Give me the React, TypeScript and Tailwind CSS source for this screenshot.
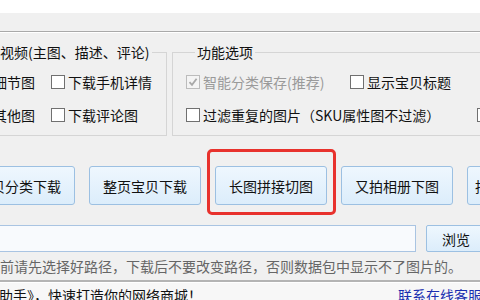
import React from 'react';

const font = { fontFamily: '"Noto Sans CJK SC", "Microsoft YaHei", sans-serif' };

const Box: React.FC<{ checked?: boolean; disabled?: boolean }> = ({ checked, disabled }) => (
  <span
    className={`flex h-[14px] w-[14px] shrink-0 items-center justify-center border ${
      disabled ? 'border-[#bcbcbc] bg-[#f4f4f4]' : 'border-[#707070] bg-white'
    }`}
  >
    {checked && (
      <svg width="10" height="10" viewBox="0 0 10 10">
        <path d="M1.5 5.2 L4 7.8 L8.6 1.8" fill="none" stroke={disabled ? '#a8a8a8' : '#222'} strokeWidth="1.8" />
      </svg>
    )}
  </span>
);

const Check: React.FC<{ label: string; checked?: boolean; disabled?: boolean }> = ({ label, checked, disabled }) => (
  <label className={`flex h-5 items-center gap-[3px] whitespace-nowrap ${disabled ? 'text-[#9a9a9a]' : 'text-[#111]'}`}>
    <Box checked={checked} disabled={disabled} />
    <span>{label}</span>
  </label>
);

const btnClass =
  'h-[39px] w-[112px] shrink-0 whitespace-nowrap rounded-[3px] border border-[#9cc0e2] bg-gradient-to-b from-[#eef7fe] to-[#dcedfb] text-[14px] text-[#111]';

export default function App() {
  return (
    <div style={font} className="relative h-[300px] w-[480px] overflow-hidden bg-[#f0f0f0] text-[14px] leading-5">
      <div className="h-[13px] bg-white" />
      <div className="h-[18px] bg-[#f0f0f0]" />
      <div className="h-[2px] border-t border-[#a9a9a9] bg-white" />

      <div className="mt-[9px] flex gap-[5px] -ml-[60px]">
        <fieldset className="w-[227px] shrink-0 border border-[#d5d5d5] pb-[10px] pl-[7px]">
          <legend className="ml-[52px] pr-[3px] whitespace-nowrap text-[#111]">视频(主图、描述、评论)</legend>
          <div className="mt-[10px] grid grid-cols-[103px_1fr] gap-y-[13px]">
            <Check label="下载细节图" />
            <Check label="下载手机详情" />
            <Check label="下载其他图" />
            <Check label="下载评论图" />
          </div>
        </fieldset>
        <fieldset className="w-[340px] shrink-0 border border-[#d5d5d5] pb-[10px] pl-[13px]">
          <legend className="ml-[9px] px-[2px] whitespace-nowrap text-[#111]">功能选项</legend>
          <div className="mt-[10px] grid grid-cols-[164px_127px_1fr] gap-y-[13px]">
            <Check label="智能分类保存(推荐)" checked disabled />
            <Check label="显示宝贝标题" />
            <span />
            <div className="col-span-2">
              <Check label="过滤重复的图片（SKU属性图不过滤）" />
            </div>
            <Check label="下载" />
          </div>
        </fieldset>
      </div>

      <div className="mt-[30px] flex gap-[14px] -ml-[37px]">
        <button className={btnClass}>宝贝分类下载</button>
        <button className={btnClass}>整页宝贝下载</button>
        <button className={btnClass}>长图拼接切图</button>
        <button className={btnClass}>又拍相册下图</button>
        <button className={`${btnClass} text-left pl-[7px]`}>批量下载</button>
      </div>

      <div className="mt-[20px] flex gap-[10px] -ml-[4px]">
        <input
          readOnly
          value=""
          className="h-[27px] w-[420px] shrink-0 border border-[#a9c4e2] bg-[#f8fafd] outline-none"
        />
        <button className="h-[27px] w-[60px] shrink-0 rounded-[2px] border border-[#9cc0e2] bg-gradient-to-b from-[#eef7fe] to-[#dcedfb] text-[14px] text-[#111]">
          浏览
        </button>
      </div>

      <div className="mt-[4px] whitespace-nowrap text-[#666]">
        <span className="-ml-[28px] inline-block">下载前请先选择好路径，下载后不要改变路径，否则数据包中显示不了图片的。</span>
      </div>

      <div className="mt-[4px] h-[3px] border-t-2 border-[#b4b4b4] bg-white" />
      <div className="flex h-[20px] items-center justify-between whitespace-nowrap bg-[#f7f7f7] pt-[4px]">
        <span className="-ml-[15px] text-[#111]">图助手》，快速打造你的网络商城！</span>
        <a className="mr-[-2px] text-[#1a2fb0] underline">联系在线客服</a>
      </div>

      <div className="pointer-events-none absolute left-[207px] top-[149px] h-[66px] w-[129px] rounded-[5px] border-[3px] border-[#e8322d]" />
    </div>
  );
}
